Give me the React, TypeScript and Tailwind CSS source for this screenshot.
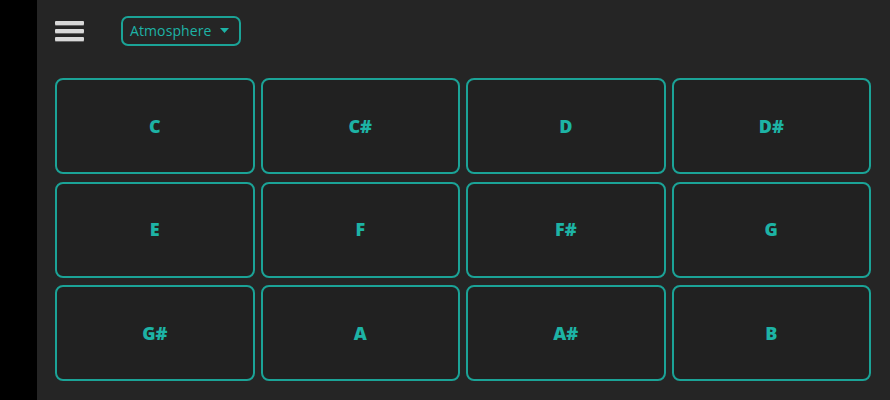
const notes = [
  ["C", "C#", "D", "D#"],
  ["E", "F", "F#", "G"],
  ["G#", "A", "A#", "B"],
];

function Hamburger() {
  return (
    <div className="flex flex-col gap-[4px] w-[29px]">
      <div className="h-[4px] rounded-[1px] bg-[#d8d8d8] shadow-[0_1px_0_#666]" />
      <div className="h-[4px] rounded-[1px] bg-[#d8d8d8] shadow-[0_1px_0_#666]" />
      <div className="h-[4px] rounded-[1px] bg-[#d8d8d8] shadow-[0_1px_0_#666]" />
    </div>
  );
}

export default function App() {
  return (
    <div
      className="flex w-[890px] h-[400px] bg-black overflow-hidden"
      style={{ fontFamily: "'Open Sans', Lato, sans-serif" }}
    >
      <div className="w-[37px] shrink-0 bg-black" />
      <div className="flex-1 flex flex-col bg-[#252525] pl-[18px] pr-[19px]">
        <div className="flex items-center h-[60px] pt-[1px]">
          <Hamburger />
          <button className="ml-[37px] flex items-center gap-[8px] w-[120px] h-[30px] pl-[7px] rounded-[7px] border-2 border-[#1ba397] text-[#1db3a5] text-[14px] tracking-[0.1px]">
            Atmosphere
            <svg width="9" height="5" viewBox="0 0 9 5">
              <path d="M0 0 L9 0 L4.5 5 Z" fill="#1db3a5" />
            </svg>
          </button>
        </div>
        <div className="mt-[18px] grid grid-cols-4 gap-x-[6px] gap-y-[7.5px]">
          {notes.flat().map((n) => (
            <div
              key={n}
              className="h-[96px] flex items-center justify-center rounded-[8px] border-2 border-[#1ba397] bg-[#212121] text-[#1db3a5] text-[18px] font-extrabold"
            >
              {n}
            </div>
          ))}
        </div>
      </div>
    </div>
  );
}
